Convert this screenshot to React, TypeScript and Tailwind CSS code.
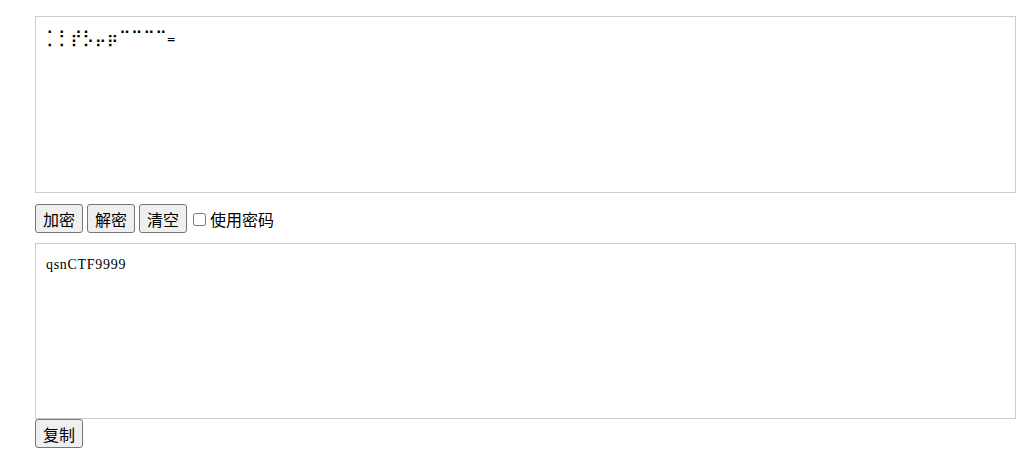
import React from "react";

const btn =
  "h-[29px] w-[48px] border border-[#767676] rounded-[3px] bg-[#efefef] text-[16px] leading-[22px] text-black font-['Microsoft_YaHei','Noto_Sans_CJK_SC',sans-serif]";

export default function App() {
  const braille = "\u2841\u2843\u285E\u2863\u2864\u2876\u2809\u2809\u2809\u2809";
  return (
    <div className="pl-[35px] pt-[16px] w-[1024px] font-['Noto_Sans_CJK_SC',sans-serif] text-black bg-white">
      <div className="w-[981px] h-[177px] border border-[#cccccc] px-[10px] pt-[12px] font-['Liberation_Serif',serif] text-[14px] leading-[18px]">
        <span className="text-[16px] tracking-[0.4px] font-['DejaVu_Sans',sans-serif]">{braille}</span>
        <span className="font-['DejaVu_Sans_Mono',monospace] text-[13px]">=</span>
      </div>
      <div className="flex items-center gap-[4px] mt-[11px] h-[29px]">
        <button className={btn}>加密</button>
        <button className={btn}>解密</button>
        <button className={btn}>清空</button>
        <label className="flex items-center ml-[2px] text-[16px] font-['Microsoft_YaHei','Noto_Sans_CJK_SC',sans-serif]">
          <input type="checkbox" className="w-[13px] h-[13px] m-0 mr-[4px] mt-[2px]" />
          <span>使用密码</span>
        </label>
      </div>
      <div className="mt-[10px] w-[981px] h-[176px] border border-[#cccccc] px-[10px] pt-[12px] font-['Liberation_Serif',serif] text-[14px] leading-[18px] tracking-[0.7px]">
        qsnCTF9999
      </div>
      <div>
        <button className={btn}>复制</button>
      </div>
    </div>
  );
}
